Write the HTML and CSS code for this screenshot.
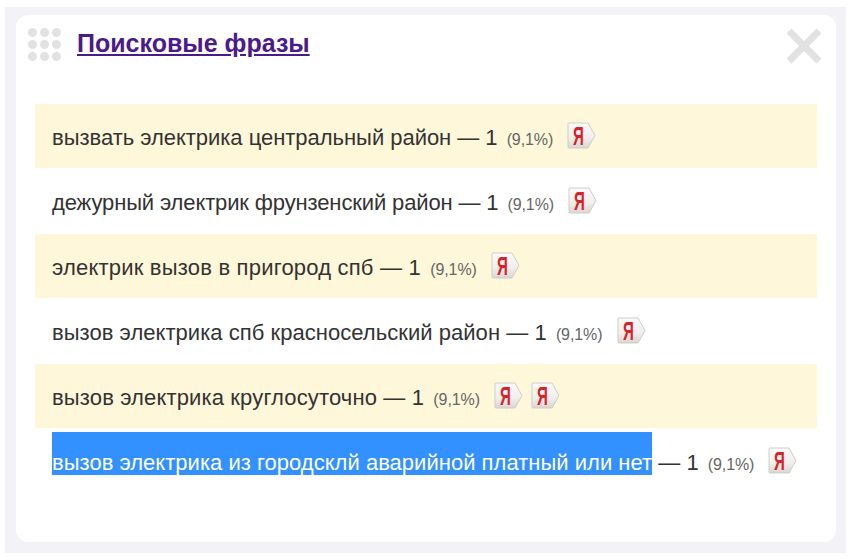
FILE: index.html
```html
<!DOCTYPE html>
<html lang="ru">
<head>
  <meta charset="UTF-8">
  <title>Поисковые фразы</title>
  <link rel="stylesheet" href="styles.css">
</head>
<body>
  <svg class="defs" width="0" height="0">
    <defs>
      <linearGradient id="tag-bg" x1="0" y1="0" x2="0" y2="1">
        <stop offset="0" stop-color="#fafafa"/>
        <stop offset="0.6" stop-color="#f1efec"/>
        <stop offset="1" stop-color="#d9d7d3"/>
      </linearGradient>
      <symbol id="ya" viewBox="0 0 29 27">
        <path d="M2 1H21L28 13.500L21 26H2Q1 26 1 25V2Q1 1 2 1Z" fill="url(#tag-bg)" stroke="#cfcdc9"/>
        <text class="ya-letter" transform="translate(11.500 22.500) scale(0.72 1.25)">Я</text>
      </symbol>
    </defs>
  </svg>
  <div class="outer">
    <div class="panel">
      <div class="head">
        <div class="dots">
          <i></i><i></i><i></i><i></i><i></i><i></i><i></i><i></i><i></i>
        </div>
        <a class="title" href="#">Поисковые фразы</a>
        <svg class="close" width="36" height="36" viewBox="0 0 36 36">
          <path d="M3 3L33 33M33 3L3 33" stroke="#e2e2e2" stroke-width="7"/>
        </svg>
      </div>
      <ul class="phrases">
        <li>вызвать электрика центральный район — 1 <small>(9,1%)</small>
          <svg class="ya"><use href="#ya"/></svg></li>
        <li>дежурный электрик фрунзенский район — 1 <small>(9,1%)</small>
          <svg class="ya"><use href="#ya"/></svg></li>
        <li>электрик вызов в пригород спб — 1 <small>(9,1%)</small>
          <svg class="ya"><use href="#ya"/></svg></li>
        <li>вызов электрика спб красносельский район — 1 <small>(9,1%)</small>
          <svg class="ya"><use href="#ya"/></svg></li>
        <li>вызов электрика круглосуточно — 1 <small>(9,1%)</small>
          <svg class="ya"><use href="#ya"/></svg>
          <svg class="ya"><use href="#ya"/></svg></li>
        <li><span class="picked">вызов электрика из городсклй аварийной платный или нет</span> — 1 <small>(9,1%)</small>
          <svg class="ya"><use href="#ya"/></svg></li>
      </ul>
    </div>
  </div>
</body>
</html>
```
FILE: styles.css
```css
html, body {
  margin: 0;
  height: 100%;
  background: #fff;
}
body {
  padding: 7px 7px 7px 5px;
  box-sizing: border-box;
  font-family: "Liberation Sans", Arial, sans-serif;
  color: #333;
}
.defs {
  position: absolute;
}
.outer {
  background: #f2f2f7;
  padding: 8px 10px 11px 11px;
}
.panel {
  background: #fff;
  border-radius: 12px;
  height: 527px;
  box-sizing: border-box;
  padding: 13px 19px 0;
}
.head {
  display: flex;
  align-items: flex-start;
  height: 76px;
  margin-left: -7px;
  margin-right: -5px;
}
.dots {
  display: grid;
  grid-template-columns: repeat(3, 9px);
  gap: 3px;
  margin-right: 16px;
}
.dots i {
  width: 9px;
  height: 9px;
  border-radius: 50%;
  background: #e2e2e2;
}
.title {
  font-size: 25px;
  font-weight: bold;
  color: #4b1a8c;
  line-height: 30px;
}
.close {
  margin-left: auto;
}
.phrases {
  list-style: none;
  margin: 0;
  padding: 0;
}
.phrases li {
  height: 65px;
  box-sizing: border-box;
  padding: 0 17px;
  font-size: 22px;
  line-height: 68px;
  white-space: nowrap;
}
.phrases li:nth-child(odd) {
  background: linear-gradient(#fef7d9 64px, #fff 64px);
}
/* row widths differ a little from plain Liberation metrics */
.phrases li:nth-child(1) { letter-spacing: -0.03px; }
.phrases li:nth-child(2) { letter-spacing: -0.13px; }
.phrases li:nth-child(3) { letter-spacing: 0.2px; }
.phrases li:nth-child(4) { letter-spacing: 0.04px; }
.phrases li:nth-child(5) { letter-spacing: 0.14px; }
.phrases li:nth-child(6) { letter-spacing: 0.02px; }
.phrases small {
  font-size: 16px;
  letter-spacing: -0.1px;
  color: #666;
  margin-left: 3px;
}
.picked {
  display: inline-block;
  background: #3390ff;
  color: #fff;
  height: 43px;
  line-height: 26px;
  padding-top: 18px;
  box-sizing: border-box;
}
.ya {
  width: 29px;
  height: 27px;
  vertical-align: -4px;
  margin-left: 8px;
}
.ya + .ya {
  margin-left: 2px;
}
.ya-letter {
  font-family: "Liberation Sans", Arial, sans-serif;
  font-size: 21px;
  font-weight: bold;
  fill: #d8232a;
  text-anchor: middle;
}
```
